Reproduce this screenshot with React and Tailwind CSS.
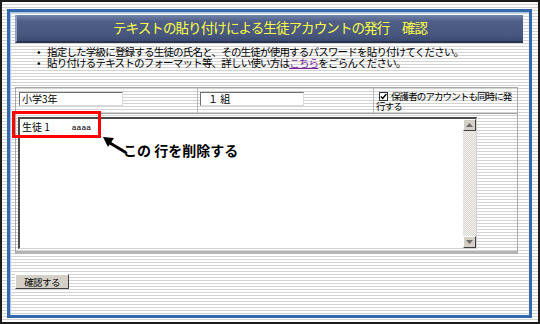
const stripes =
  "bg-[repeating-linear-gradient(to_bottom,#ffffff_0px,#ffffff_2px,#d3d3d3_2px,#d3d3d3_3px)]";

const ScrollButton = ({ up }) => (
  <div className="h-[12px] w-[13px] bg-[#d4d0c8] border border-t-white border-l-white border-r-[#404040] border-b-[#404040] flex items-center justify-center">
    <svg width="7" height="4" viewBox="0 0 7 4">
      {up ? <path d="M3.5 0 L7 4 L0 4 Z" fill="#6b6b6b" /> : <path d="M0 0 L7 0 L3.5 4 Z" fill="#6b6b6b" />}
    </svg>
  </div>
);

const Field = ({ width, children }) => (
  <div
    className={`${width} h-[14px] bg-white border border-t-[#6f6f6f] border-l-[#6f6f6f] border-r-[#dcdcdc] border-b-[#dcdcdc] text-[10px] leading-[12px] pl-[2px] text-black`}
  >
    {children}
  </div>
);

const App = () => {
  return (
    <div
      className={`w-[540px] h-[324px] border-2 border-[#1c1c1c] ${stripes} overflow-hidden font-['Noto_Sans_CJK_JP','Noto_Sans',sans-serif] text-black`}
    >
      <div className="ml-[5px] mt-[7px] w-[525px] h-[309px] border-[3px] border-[#3468ad] shadow-[inset_1px_1px_0_#a9c4e4] flex flex-col">
        {/* title */}
        <div className="ml-[5px] mt-[3px] w-[508px] h-[28px] border-l-2 border-l-[#8f9fc3] border-b-2 border-b-[#2b3550] bg-[linear-gradient(to_bottom,#7384aa_0%,#4f5f87_25%,#46567d_80%,#3b4a6e_100%)] flex items-center justify-center">
          <span className="text-[13.5px] tracking-[-0.9px] text-[#ffff44] leading-none">
            テキストの貼り付けによる生徒アカウントの発行　確認
          </span>
        </div>

        {/* notes */}
        <ul className="ml-[27px] mt-[3px] text-[10.5px] tracking-[-0.8px] leading-[11px]">
          <li className="flex">
            <span className="w-[10px]">•</span>
            <span>指定した学級に登録する生徒の氏名と、その生徒が使用するパスワードを貼り付けてください。</span>
          </li>
          <li className="flex">
            <span className="w-[10px]">•</span>
            <span>
              貼り付けるテキストのフォーマット等、詳しい使い方は
              <a className="text-[#7a1f9a] underline">こちら</a>
              をごらんください。
            </span>
          </li>
        </ul>

        {/* form table */}
        <div className="ml-[5px] mt-[19px] w-[503px] border border-[#a9a9a9] border-b-[3px] border-b-[#b4b4b4]">
          <div className="h-[26px] flex border-b border-[#9c9c9c]">
            <div className="w-[182px] border-r border-r-[#b8b8b8] pl-[3px] pt-[4px]">
              <Field width="w-[104px]">小学3年</Field>
            </div>
            <div className="w-[176px] border-r border-r-[#b8b8b8] pl-[2px] pt-[4px]">
              <Field width="w-[104px]">
                <span className="pl-[5px]">１ 組</span>
              </Field>
            </div>
            <div className="flex-1 pl-[2px] pt-[3px] text-[9.5px] tracking-[-0.9px] leading-[10px]">
              <div className="flex items-center">
                <span className="ml-[3px] mr-[3px] w-[9px] h-[9px] bg-white border border-[#333] flex items-center justify-center">
                  <svg width="7" height="7" viewBox="0 0 7 7">
                    <path d="M0.8 3.4 L2.7 5.4 L6.3 1" fill="none" stroke="#000" strokeWidth="1.4" />
                  </svg>
                </span>
                <span>保護者のアカウントも同時に発</span>
              </div>
              <div>行する</div>
            </div>
          </div>

          <div className="relative h-[137px] pl-[2px] pt-[3px]">
            <div className="w-[459px] h-[132px] bg-white border-l-2 border-t-2 border-l-[#4a4a4a] border-t-[#4a4a4a] border-r border-b border-r-[#d0d0d0] border-b-[#d0d0d0] flex">
              <div className="flex-1 pl-[2px] pt-[2px] text-[10px] leading-[12px] flex items-start">
                <span>生徒 1</span>
                <span className="ml-[22px] mt-[1px] font-['Liberation_Mono',monospace] text-[8px]">aaaa</span>
              </div>
              <div className="w-[13px] flex flex-col">
                <ScrollButton up />
                <div className="flex-1 bg-[repeating-conic-gradient(#d9d6cf_0_25%,#f4f3f0_0_50%)] bg-[length:2px_2px]" />
                <ScrollButton />
              </div>
            </div>

            {/* annotation */}
            <div className="absolute left-[-4px] top-[-3px] w-[89px] h-[27px] border-[3px] border-[#ff0000]" />
            <svg className="absolute left-[85px] top-[20px]" width="26" height="20" viewBox="0 0 26 20">
              <path d="M9 9 L24 18" stroke="#000" strokeWidth="3" strokeLinecap="round" />
              <path d="M2 3 L13 4 L7 13 Z" fill="#000" />
            </svg>
            <div className="absolute left-[107px] top-[28px] text-[14px] font-bold leading-[16px] whitespace-nowrap">
              この 行を削除する
            </div>
          </div>
        </div>

        {/* submit */}
        <div className="ml-[5px] mt-[20px]">
          <button className="w-[54px] h-[15px] bg-[#d4d0c8] border border-t-white border-l-white border-r-[#404040] border-b-[#404040] text-[9.5px] tracking-[-0.6px] leading-[12px] flex items-center justify-center">
            確認する
          </button>
        </div>
      </div>
    </div>
  );
};

export default App;
